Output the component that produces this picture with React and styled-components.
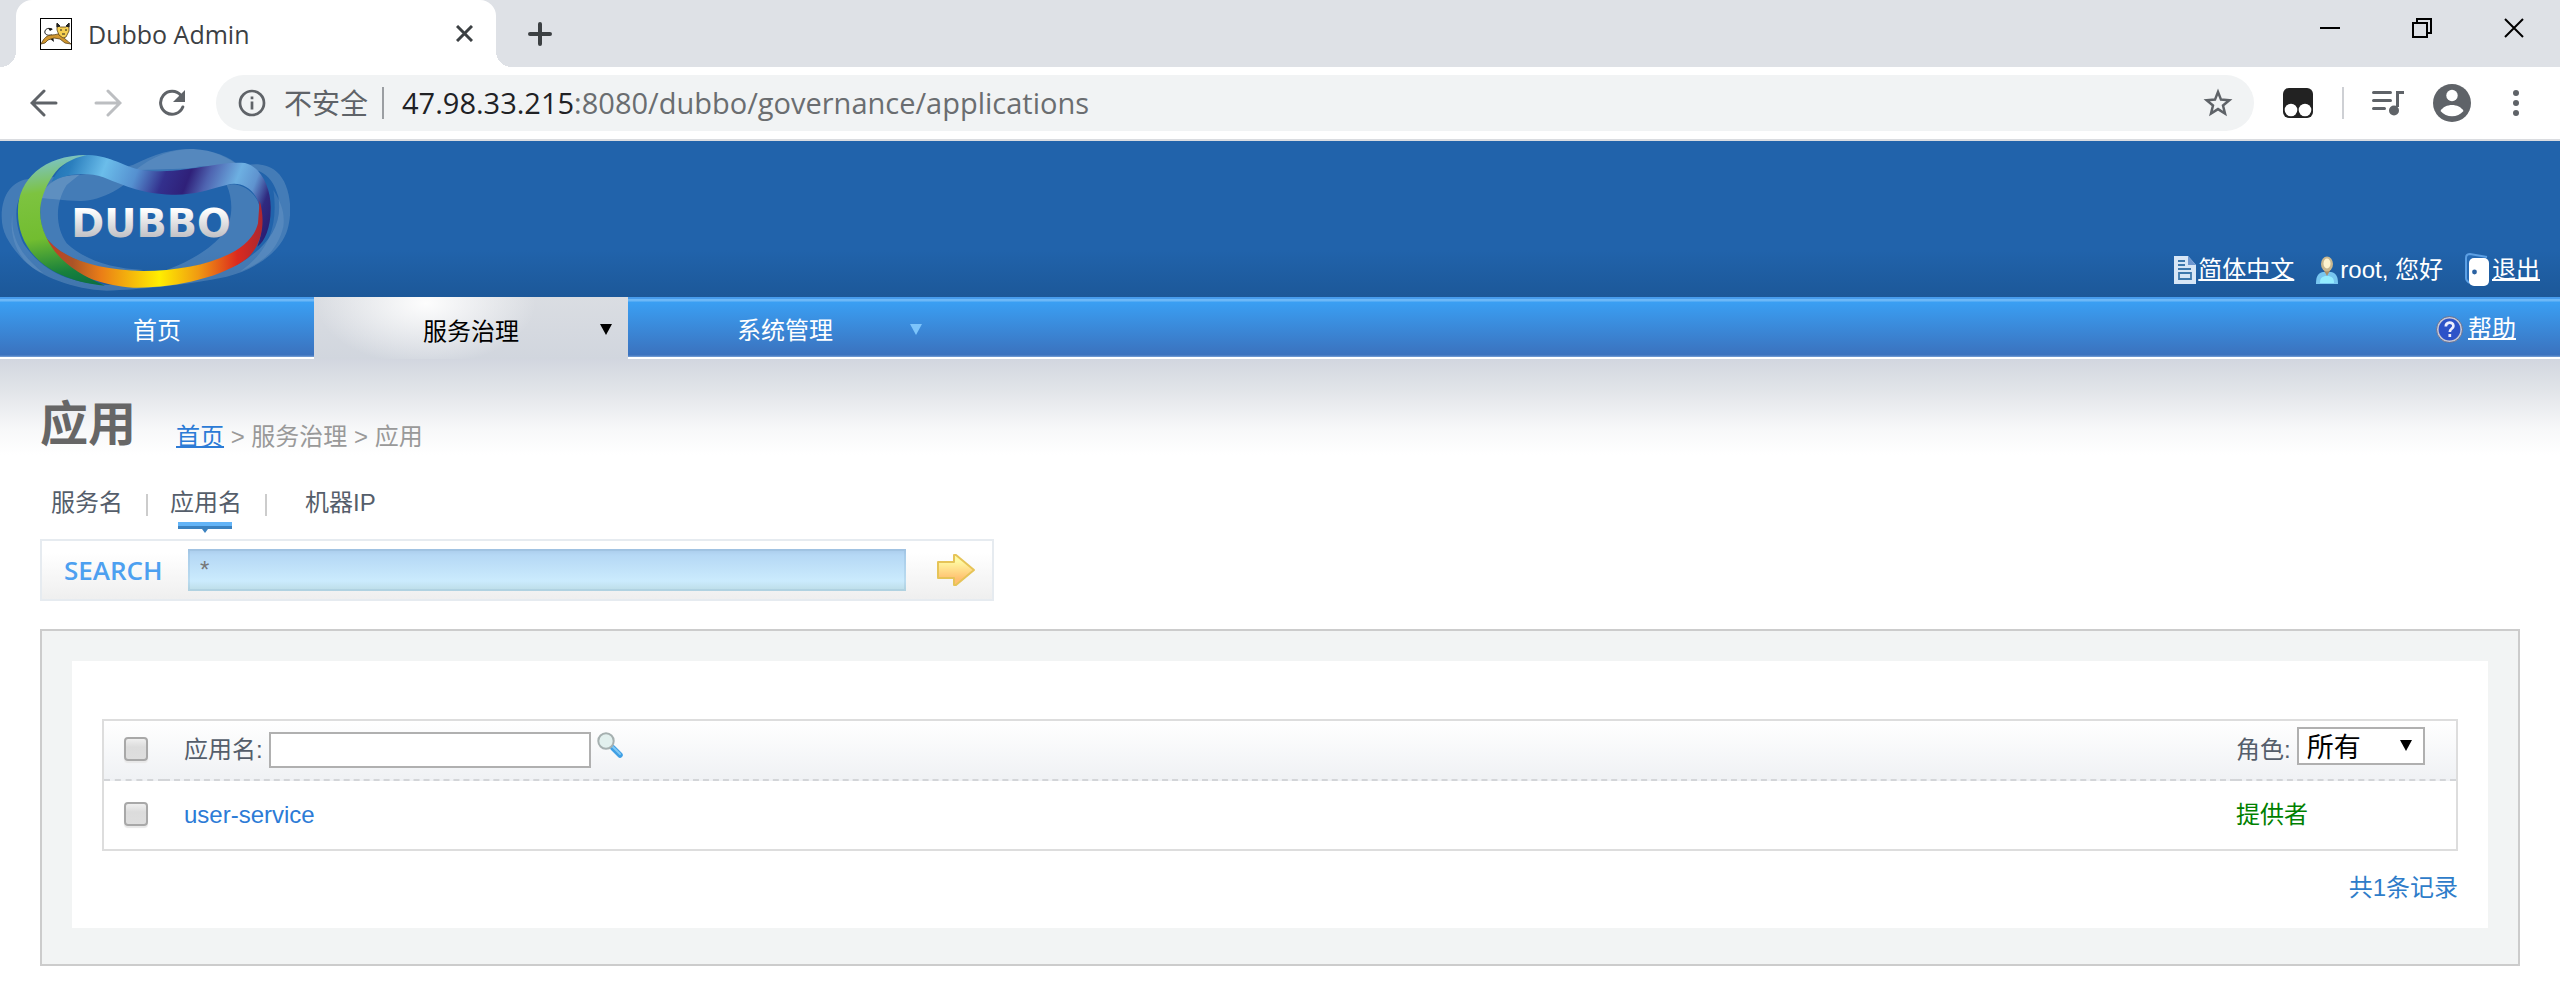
import React from 'react'
import styled, {createGlobalStyle} from 'styled-components'

const pageFont = "'Liberation Sans', 'Noto Sans CJK SC', sans-serif"
const chromeFont = "'Open Sans', 'Noto Sans CJK SC', sans-serif"

const GlobalStyle = createGlobalStyle`
  * {
    box-sizing: border-box;
  }
  body {
    margin: 0;
    background: white;
    font-family: ${pageFont};
    font-size: 24px;
    line-height: 32px;
    color: #555e6b;
  }
  button, input, select {
    font: inherit;
    color: inherit;
    margin: 0;
    padding: 0;
    border: 0;
    border-radius: 0;
    background: none;
  }
  svg {
    display: block;
    flex: none;
  }
`

// browser window

const TabStrip = styled.div`
  display: flex;
  justify-content: space-between;
  height: 67px;
  padding: 0 26px 0 16px;
  background: #dee1e6;
  font-family: ${chromeFont};
  font-size: 25px;
  color: #3c4043;
`

const TabGroup = styled.div`
  display: flex;
  align-items: center;
`

const BrowserTab = styled.div`
  position: relative;
  display: flex;
  align-items: center;
  gap: 16px;
  width: 480px;
  height: 100%;
  padding: 0 12px 0 24px;
  border-radius: 16px 16px 0 0;
  background: white;
  &::before, &::after {
    content: '';
    position: absolute;
    bottom: 0;
    width: 16px;
    height: 16px;
  }
  &::before {
    right: 100%;
    background: radial-gradient(circle at 0 0, transparent 16px, white 16px);
  }
  &::after {
    left: 100%;
    background: radial-gradient(circle at 100% 0, transparent 16px, white 16px);
  }
`

const TabTitle = styled.span`
  flex: 1;
`

const IconButton = styled.button`
  display: flex;
  align-items: center;
  justify-content: center;
  width: ${props => props.$width || 40}px;
  height: 40px;
  color: ${props => props.$color || '#5f6368'};
`

const WindowButtons = styled.div`
  display: flex;
  align-items: flex-start;
  gap: 52px;
  padding-top: 8px;
`

const Toolbar = styled.div`
  display: flex;
  align-items: center;
  gap: 24px;
  height: 74px;
  padding: 0 24px;
  border-bottom: 2px solid #dadce0;
  background: white;
  font-family: ${chromeFont};
`

const AddressBar = styled.div`
  flex: 1;
  display: flex;
  align-items: center;
  height: 56px;
  padding: 0 16px 0 22px;
  border-radius: 28px;
  background: #f1f3f4;
  font-size: 28px;
  color: #5f6368;
`

const Insecure = styled.span`
  margin-left: 18px;
`

const ChromeDivider = styled.span`
  width: 2px;
  height: 32px;
  margin: ${props => props.$margin || '0'};
  background: ${props => props.$color};
`

const Url = styled.div`
  flex: 1;
  color: #6a6d70;
  font-size: 29px;
`

const UrlHost = styled.span`
  color: #202124;
`

// page header

const Header = styled.header`
  display: flex;
  justify-content: space-between;
  align-items: flex-end;
  background: linear-gradient(#2163ab 0%, #2163ab 70%, #1c5899 100%);
`

const UserLinks = styled.div`
  display: flex;
  gap: 22px;
  padding: 0 20px 10px;
  color: white;
`

const IconText = styled.span`
  display: flex;
  align-items: center;
  gap: ${props => props.$gap || 2}px;
  color: white;
`

const PlainLink = styled.a`
  color: ${props => props.$color || 'white'};
  text-decoration: ${props => props.$underline ? 'underline' : 'none'};
  text-decoration-thickness: 2px;
`

const Nav = styled.nav`
  display: flex;
  height: 62px;
  border-bottom: 2px solid white;
  background: linear-gradient(#479ced 0, #479ced 2px, #6db8f7 2px, #6db8f7 4px, #3a9ff3 5px, #3b72be 58px, #7ba2d6 60px);
`

const NavItem = styled.a`
  position: relative;
  display: flex;
  align-items: center;
  justify-content: center;
  width: 314px;
  height: ${props => props.$active ? 62 : 60}px;
  padding-top: 8px;
  text-decoration: none;
  color: ${props => props.$active ? 'black' : 'white'};
  background: ${props => props.$active
    ? 'radial-gradient(ellipse 110px 62px at 112px 6px, #fdfdfd, rgba(253, 253, 253, 0)), linear-gradient(#dadde2, #d1d6de)'
    : 'none'};
  & svg {
    position: absolute;
    right: ${props => props.$active ? 16 : 20}px;
    top: 26px;
  }
`

const NavHelp = styled.div`
  display: flex;
  align-items: center;
  margin-left: auto;
  padding: 4px 44px 0 0;
`

// content

const Main = styled.main`
  padding: 38px 40px 30px;
  background: linear-gradient(#d2d6df 0, #e2e5e9 32px, #f7f8f9 70px, white 96px);
`

const TitleRow = styled.div`
  display: flex;
  align-items: flex-end;
  gap: 40px;
`

const Title = styled.h1`
  margin: 0;
  font-size: 48px;
  line-height: 56px;
  color: #666;
`

const Breadcrumb = styled.div`
  color: #999;
`

const Tabs = styled.div`
  display: flex;
  margin-top: 34px;
  padding-left: 11px;
  height: 52px;
`

const Tab = styled.a`
  position: relative;
  height: 40px;
  padding-right: 25px;
  margin-right: ${props => props.$wide ? 38 : 22}px;
  text-decoration: none;
  color: #555e6b;
  background: ${props => props.$last ? 'none' : 'linear-gradient(#ccc, #ccc) right 7px / 2px 22px no-repeat'};
  & svg {
    position: absolute;
    left: 8px;
    top: 35px;
  }
`

const SearchBar = styled.form`
  display: flex;
  align-items: center;
  width: 954px;
  max-width: 100%;
  height: 62px;
  padding: 0 16px 0 22px;
  border: 2px solid #e6ebf0;
  background: linear-gradient(white 20%, #efefef);
`

const SearchLabel = styled.label`
  width: 124px;
  font-family: ${chromeFont};
  font-size: 26px;
  font-weight: 600;
  color: #4da0f0;
`

const SearchInput = styled.input`
  && {
    flex: 1;
    min-width: 0;
    height: 42px;
    margin-right: 30px;
    padding: 0 10px;
    border: 2px solid rgba(120, 160, 190, 0.2);
    background: linear-gradient(#a9caea 0, #b5d8f5 6px, #cbebfd 32px, #bfdfea 40px) border-box;
    color: #777;
  }
`

const Panel = styled.section`
  margin-top: 28px;
  padding: 30px 30px 36px;
  border: 2px solid #ccc;
  background: #f2f4f4;
`

const PanelBody = styled.div`
  padding: 58px 30px 24px;
  background: white;
`

const Table = styled.table`
  width: 100%;
  border: 2px solid #ddd;
  border-spacing: 0;
  table-layout: fixed;
`

const HeadRow = styled.tr`
  height: 60px;
  background: linear-gradient(white, #eff1f4);
`

const HeadCell = styled.th`
  width: ${props => props.$width || 'auto'};
  padding: 0 0 0 ${props => props.$indent || 0}px;
  border-bottom: 2px dashed #d3d5d8;
  text-align: left;
  font-weight: normal;
`

const Cell = styled.td`
  height: 68px;
  padding: 0 0 0 ${props => props.$indent || 0}px;
  color: ${props => props.$color || 'inherit'};
`

const Checkbox = styled.input.attrs({type: 'checkbox'})`
  && {
    appearance: none;
    display: block;
    width: 24px;
    height: 24px;
    margin-bottom: 2px;
    border: 2px solid #a8a8a8;
    border-radius: 4px;
    background: linear-gradient(#efefef, #dcdcdc 40%, #dedede);
    box-shadow: 0 2px 1px #e8e8e8;
  }
`

const Field = styled.div`
  display: flex;
  align-items: center;
`

const FilterInput = styled.input`
  && {
    width: 322px;
    height: 36px;
    margin: 0 6px;
    padding: 0 6px;
    border: 2px solid #b0b0b0;
    background: white;
  }
`

const SearchButton = styled.button`
  align-self: flex-start;
`

const SelectWrap = styled.div`
  position: relative;
  margin: 0 0 8px 6px;
  & svg {
    position: absolute;
    right: 13px;
    top: 12px;
    pointer-events: none;
  }
`

const Select = styled.select`
  && {
    appearance: none;
    display: block;
    width: 128px;
    height: 38px;
    padding: 2px 0 0 8px;
    border: 2px solid #b0b0b0;
    background: white;
    font-size: 27px;
    line-height: 34px;
    color: black;
  }
`

const Total = styled.div`
  margin-top: 21px;
  text-align: right;
  color: #2e7cc9;
`

const CatIcon = () => (
  <svg width='32' height='32' viewBox='0 0 32 32'>
    <rect x='0.5' y='0.5' width='31' height='31' fill='#fff' stroke='#000' />
    <path d='M12 17c-5 1-8-1-7-4s4-3 7-2' fill='none' stroke='#222' strokeWidth='1' />
    <path d='M8 10l5 1-3 2zM9 20l5 4-1-6z' fill='#111' />
    <path d='M1 26c3-6 6-9 11-9 4 0 7-2 9-1 3 5 7 7 10 10l-6-1-5-4-6-1-6 2-3 3z' fill='#d0962f' stroke='#5b4216' strokeWidth='.8' />
    <path d='M17 6l3 3h6l3-4v8l-3 6-3 1-4-3-2-5z' fill='#f6cf52' stroke='#5b4216' strokeWidth='.8' />
    <path d='M17 5v4l3-1zM29 5v4l-3-1zM20 12h2M25 12h2M22 16h3' fill='#222' stroke='#222' />
  </svg>
)

const CrossIcon = ({size, weight}) => (
  <svg width={size} height={size} viewBox={`0 0 ${size} ${size}`}>
    <path d={`M1 1L${size - 1} ${size - 1}M${size - 1} 1L1 ${size - 1}`} stroke='currentColor' strokeWidth={weight} />
  </svg>
)

const PlusIcon = () => (
  <svg width='24' height='24' viewBox='0 0 24 24'>
    <path d='M12 2v20M2 12h20' stroke='currentColor' strokeWidth='4' strokeLinecap='round' />
  </svg>
)

const ArrowIcon = ({flip}) => (
  <svg width='28' height='28' viewBox='0 0 28 28'>
    <path
      d={flip ? 'M2 14h22M14 2l12 12-12 12' : 'M26 14H4M14 2L2 14l12 12'}
      fill='none'
      stroke='currentColor'
      strokeWidth='3'
      strokeLinecap='round'
    />
  </svg>
)

const ReloadIcon = () => (
  <svg width='28' height='28' viewBox='0 0 28 28'>
    <path d='M23 6.500A11.500 11.500 0 1 0 24.800 18' fill='none' stroke='currentColor' strokeWidth='3' strokeLinecap='round' />
    <path d='M27 1v12H15z' fill='currentColor' />
  </svg>
)

const InfoIcon = () => (
  <svg width='28' height='28' viewBox='0 0 28 28'>
    <circle cx='14' cy='14' r='12' fill='none' stroke='currentColor' strokeWidth='2.700' />
    <path d='M14 12.500v8M14 7.500v2.700' stroke='currentColor' strokeWidth='2.700' />
  </svg>
)

const StarIcon = () => (
  <svg width='32' height='32' viewBox='0 0 32 32'>
    <path
      d='M16 5l3 7.600 8.300.6-6.300 5.300 2 8-7-4.400-7 4.400 2-8-6.300-5.300 8.300-.6z'
      fill='none'
      stroke='currentColor'
      strokeWidth='2.500'
    />
  </svg>
)

const ExtensionIcon = () => (
  <svg width='30' height='30' viewBox='0 0 30 30'>
    <rect width='30' height='30' rx='6' fill='#222' />
    <circle cx='8' cy='22' r='6.300' fill='#fff' />
    <circle cx='22' cy='22' r='6.300' fill='#fff' />
  </svg>
)

const PlaylistIcon = () => (
  <svg width='32' height='26' viewBox='0 0 32 26'>
    <path d='M1.500 2.500h17M1.500 10.500h17M1.500 18.500h11' stroke='currentColor' strokeWidth='3' strokeLinecap='round' />
    <path d='M32 1h-8v16h3V4h5z' fill='currentColor' />
    <circle cx='22' cy='20.500' r='5' fill='currentColor' />
  </svg>
)

const AvatarIcon = () => (
  <svg width='38' height='38' viewBox='0 0 38 38'>
    <circle cx='19' cy='19' r='19' fill='currentColor' />
    <circle cx='19' cy='11.500' r='5.700' fill='#fff' />
    <path d='M7.500 27c2-4 7-6 11.500-6s9.500 2 11.500 6c-3 3.600-7 5.200-11.500 5.200S10.500 30.600 7.500 27z' fill='#fff' />
  </svg>
)

const DotsIcon = () => (
  <svg width='6' height='26' viewBox='0 0 6 26'>
    {[3, 13, 23].map(y => <circle key={y} cx='3' cy={y} r='3' fill='currentColor' />)}
  </svg>
)

const Logo = () => (
  <svg width='290' height='156' viewBox='0 33 870 468' role='img' aria-label='DUBBO'>
    <defs>
      <linearGradient id='green' x1='0.600' y1='0' x2='0.700' y2='1'>
        <stop offset='0' stopColor='#7cc3c4' />
        <stop offset='.25' stopColor='#7dc340' />
        <stop offset='.6' stopColor='#72bd30' />
        <stop offset='.88' stopColor='#17803c' />
        <stop offset='1' stopColor='#0d7040' />
      </linearGradient>
      <linearGradient id='wave' gradientUnits='userSpaceOnUse' x1='165' y1='80' x2='800' y2='330'>
        <stop offset='0' stopColor='#2172b5' />
        <stop offset='.08' stopColor='#2b7fbe' />
        <stop offset='.22' stopColor='#6bbdea' />
        <stop offset='.36' stopColor='#5590d0' />
        <stop offset='.48' stopColor='#33308d' />
        <stop offset='.58' stopColor='#2f2079' />
        <stop offset='.66' stopColor='#4e63b0' />
        <stop offset='.78' stopColor='#6db0e2' />
        <stop offset='.86' stopColor='#5f93cf' />
        <stop offset='.93' stopColor='#2f2a80' />
        <stop offset='1' stopColor='#2a1c70' />
      </linearGradient>
      <linearGradient id='fire' gradientUnits='userSpaceOnUse' x1='140' y1='0' x2='790' y2='0'>
        <stop offset='0' stopColor='#c33b26' />
        <stop offset='.12' stopColor='#ab5427' />
        <stop offset='.25' stopColor='#ea7d17' />
        <stop offset='.52' stopColor='#ffee00' />
        <stop offset='.7' stopColor='#f09a12' />
        <stop offset='.88' stopColor='#dc2a1e' />
        <stop offset='1' stopColor='#a92732' />
      </linearGradient>
      <linearGradient id='letters' x1='0' y1='0' x2='0' y2='1'>
        <stop offset='.2' stopColor='#fff' />
        <stop offset='.8' stopColor='#c2c2c6' />
      </linearGradient>
    </defs>
    <g fill='#a9c4dc'>
      <path opacity='.26' fillRule='evenodd' d='M5 260C5 190 40 150 90 146 180 140 330 130 400 104 470 70 520 55 580 57 640 60 690 80 720 110 760 98 800 100 830 125 870 160 880 240 862 300 840 370 760 420 680 440 560 465 420 478 320 482 220 478 120 440 70 390 30 345 5 310 5 260zM60 200C40 240 50 300 70 340 130 430 220 462 330 465 480 465 620 450 720 400 800 350 850 290 835 200 815 130 780 120 730 110L420 120C380 170 300 215 240 213 190 213 150 205 120 205z' />
      <path opacity='.26' fillRule='evenodd' d='M125 200C135 160 180 135 240 133L200 165C165 220 165 290 200 340 260 395 340 415 430 420L400 424C280 420 180 380 140 325 120 290 118 240 125 200zM680 165C720 155 765 185 778 225 790 280 760 340 700 370 640 400 560 415 500 420 580 390 640 350 670 310 700 270 700 210 680 165z' />
      <path opacity='.18' d='M400 125C460 75 520 57 580 57 640 60 680 80 720 110L600 108C540 125 460 130 400 125zM820 180C845 220 855 250 850 290 830 370 780 400 720 425 780 380 840 320 820 180zM38 250C25 310 50 400 130 430 70 380 30 330 38 250z' />
    </g>
    <path fill='url(#wave)' d='M155 155C180 105 220 75 265 75 335 78 370 110 425 120 500 130 560 118 620 109 660 101 700 96 735 99 785 110 815 180 812 240 812 290 795 335 772 350 795 290 785 240 770 205 750 165 710 155 680 165 620 180 580 196 515 194 430 192 380 170 310 142 260 125 200 130 155 155z' />
    <path fill='url(#fire)' d='M130 310C170 380 280 420 430 423 580 422 750 380 774 280L779 212C796 270 790 340 742 385 670 440 530 475 400 473 280 465 150 410 130 310z' />
    <path fill='url(#green)' d='M260 75C130 75 55 150 54 240 50 350 130 450 315 467 230 430 170 390 138 320 110 260 115 200 160 135 180 105 215 85 260 75z' />
    <text x='214' y='321' fontFamily='DejaVu Sans, sans-serif' fontWeight='bold' fontSize='119' fill='url(#letters)'>DUBBO</text>
  </svg>
)

const DocIcon = () => (
  <svg width='22' height='28' viewBox='0 0 22 28'>
    <path d='M0 0h14l8 9v19H0z' fill='#d7e6f6' />
    <path d='M14 0l8 9h-8z' fill='#6d96cf' />
    <path d='M4 5h7M4 9h7M4 13h13M5 17h12v6H5z' fill='none' stroke='#3e78ac' strokeWidth='1.800' />
  </svg>
)

const UserIcon = () => (
  <svg width='22' height='28' viewBox='0 0 22 28'>
    <path d='M0 28c0-6 1-11 7-12h8c6 1 7 6 7 12z' fill='#78c6f0' />
    <path d='M4 27c0-5 2-7 7-7s7 2 7 7z' fill='#93ecff' />
    <path d='M7 13l4 7 4-7z' fill='#a98e68' />
    <ellipse cx='11' cy='8' rx='6' ry='7.500' fill='#c9b78f' />
    <ellipse cx='11' cy='7.500' rx='3.500' ry='5' fill='#fff3ce' />
  </svg>
)

const DoorIcon = () => (
  <svg width='25' height='34' viewBox='0 0 25 34'>
    <path d='M22 4L5 1Q1 1 1 5v20q0 3 4 5' fill='#2469b4' stroke='#5da0e4' strokeWidth='2' />
    <rect x='4' y='5' width='20' height='28' rx='5' fill='#fff' />
    <circle cx='9.500' cy='19' r='2.400' fill='#2b62a2' />
  </svg>
)

const HelpIcon = () => (
  <svg width='27' height='27' viewBox='0 0 27 27'>
    <circle cx='13.500' cy='13.500' r='12' fill='#2d52c8' stroke='#c5c8d6' strokeWidth='2.200' />
    <circle cx='13.500' cy='13.500' r='13' fill='none' stroke='#5a5f80' strokeWidth='.8' />
    <path d='M9.800 10.500c0-5 7.600-5 7.600-.6 0 3-3.600 2.700-3.600 6M13.800 18v3' fill='none' stroke='#eef' strokeWidth='2.700' />
  </svg>
)

const Caret = ({color}) => (
  <svg width='12' height='12' viewBox='0 0 12 12'>
    <path d='M0 1h12L6 12z' fill={color} />
  </svg>
)

const TabMarker = () => (
  <svg width='54' height='11' viewBox='0 0 54 11'>
    <path d='M0 0h54v5H0z' fill='#63b4f7' />
    <path d='M0 4h54v3H30l-3 4-3-4H0z' fill='#3b82c0' />
  </svg>
)

const GoIcon = () => (
  <svg width='40' height='34' viewBox='0 0 40 34'>
    <defs>
      <linearGradient id='go' x1='0' y1='0' x2='0' y2='1'>
        <stop offset='.2' stopColor='#fff9a2' />
        <stop offset='.8' stopColor='#ffc070' />
      </linearGradient>
    </defs>
    <path d='M2 9h16V2h2l18 15-18 15h-2v-7H2z' fill='url(#go)' stroke='#e6c458' strokeWidth='2' strokeLinejoin='round' />
  </svg>
)

const MagnifierIcon = () => (
  <svg width='26' height='26' viewBox='0 0 26 26'>
    <path d='M16 16l7 7' stroke='#3f9fe4' strokeWidth='5.500' strokeLinecap='round' />
    <path d='M16 15l7 7' stroke='#80c8f4' strokeWidth='2' strokeLinecap='round' />
    <circle cx='9' cy='9' r='7.700' fill='#e2f0ee' stroke='#a6b0b0' strokeWidth='2' />
  </svg>
)

const BrowserWindow = () => (
  <>
    <TabStrip>
      <TabGroup>
        <BrowserTab>
          <CatIcon />
          <TabTitle>Dubbo Admin</TabTitle>
          <IconButton $color='#3c4043' aria-label='Close tab'><CrossIcon size={17} weight={3} /></IconButton>
        </BrowserTab>
        <IconButton $width={88} $color='#3c4043' aria-label='New tab'><PlusIcon /></IconButton>
      </TabGroup>
      <WindowButtons>
        <IconButton $color='black' aria-label='Minimize'>
          <svg width='20' height='20' viewBox='0 0 20 20'><path d='M0 10h20' stroke='currentColor' strokeWidth='2' /></svg>
        </IconButton>
        <IconButton $color='black' aria-label='Restore'>
          <svg width='20' height='20' viewBox='0 0 20 20'>
            <path d='M1 5h14v14H1zM5 5V1h14v14h-4' fill='none' stroke='currentColor' strokeWidth='2' />
          </svg>
        </IconButton>
        <IconButton $color='black' aria-label='Close'><CrossIcon size={20} weight={2} /></IconButton>
      </WindowButtons>
    </TabStrip>
    <Toolbar>
      <IconButton aria-label='Back'><ArrowIcon /></IconButton>
      <IconButton $color='#bcbec1' aria-label='Forward'><ArrowIcon flip /></IconButton>
      <IconButton aria-label='Reload'><ReloadIcon /></IconButton>
      <AddressBar>
        <InfoIcon />
        <Insecure>不安全</Insecure>
        <ChromeDivider $color='#9b9ea2' $margin='0 18px 0 14px' />
        <Url role='textbox' aria-label='Address'>
          <UrlHost>47.98.33.215</UrlHost>:8080/dubbo/governance/applications
        </Url>
        <IconButton aria-label='Bookmark'><StarIcon /></IconButton>
      </AddressBar>
      <IconButton aria-label='Extension'><ExtensionIcon /></IconButton>
      <ChromeDivider $color='#ced0d4' />
      <IconButton aria-label='Playlist'><PlaylistIcon /></IconButton>
      <IconButton aria-label='Profile'><AvatarIcon /></IconButton>
      <IconButton aria-label='Menu'><DotsIcon /></IconButton>
    </Toolbar>
  </>
)

const PageHeader = () => (
  <>
    <Header>
      <Logo />
      <UserLinks>
        <IconText><DocIcon /><PlainLink href='#lang' $underline>简体中文</PlainLink></IconText>
        <IconText><UserIcon />root, 您好</IconText>
        <IconText><DoorIcon /><PlainLink href='#logout' $underline>退出</PlainLink></IconText>
      </UserLinks>
    </Header>
    <Nav>
      <NavItem href='#home'>首页</NavItem>
      <NavItem href='#governance' $active>服务治理<Caret color='black' /></NavItem>
      <NavItem href='#system'>系统管理<Caret color='#7cc4fb' /></NavItem>
      <NavHelp>
        <IconText $gap={5}><HelpIcon /><PlainLink href='#help' $underline>帮助</PlainLink></IconText>
      </NavHelp>
    </Nav>
  </>
)

const applications = [
  {name: 'user-service', role: '提供者'},
]

const ApplicationTable = () => (
  <Table>
    <thead>
      <HeadRow>
        <HeadCell $width='60px' $indent={20}><Checkbox aria-label='全选' /></HeadCell>
        <HeadCell $indent={20}>
          <Field>
            <label htmlFor='name'>应用名:</label>
            <FilterInput id='name' />
            <SearchButton aria-label='搜索'><MagnifierIcon /></SearchButton>
          </Field>
        </HeadCell>
        <HeadCell $width='220px'>
          <Field>
            <label htmlFor='role'>角色:</label>
            <SelectWrap>
              <Select id='role' defaultValue='all'>
                <option value='all'>所有</option>
                <option value='provider'>提供者</option>
              </Select>
              <Caret color='black' />
            </SelectWrap>
          </Field>
        </HeadCell>
      </HeadRow>
    </thead>
    <tbody>
      {applications.map(({name, role}) => (
        <tr key={name}>
          <Cell $indent={20}><Checkbox aria-label={name} /></Cell>
          <Cell $indent={20}><PlainLink href={`#${name}`} $color='#2c7bd6'>{name}</PlainLink></Cell>
          <Cell $color='green'>{role}</Cell>
        </tr>
      ))}
    </tbody>
  </Table>
)

export default function App() {
  return (
    <>
      <GlobalStyle />
      <BrowserWindow />
      <PageHeader />
      <Main>
        <TitleRow>
          <Title>应用</Title>
          <Breadcrumb>
            <PlainLink href='#home' $color='#2c7bd6' $underline>首页</PlainLink> &gt; 服务治理 &gt; 应用
          </Breadcrumb>
        </TitleRow>
        <Tabs>
          <Tab href='#services'>服务名</Tab>
          <Tab href='#applications' $wide>应用名<TabMarker /></Tab>
          <Tab href='#addresses' $last>机器IP</Tab>
        </Tabs>
        <SearchBar>
          <SearchLabel htmlFor='keyword'>SEARCH</SearchLabel>
          <SearchInput id='keyword' defaultValue='*' />
          <button type='button' aria-label='Go'><GoIcon /></button>
        </SearchBar>
        <Panel>
          <PanelBody>
            <ApplicationTable />
            <Total>共1条记录</Total>
          </PanelBody>
        </Panel>
      </Main>
    </>
  )
}
